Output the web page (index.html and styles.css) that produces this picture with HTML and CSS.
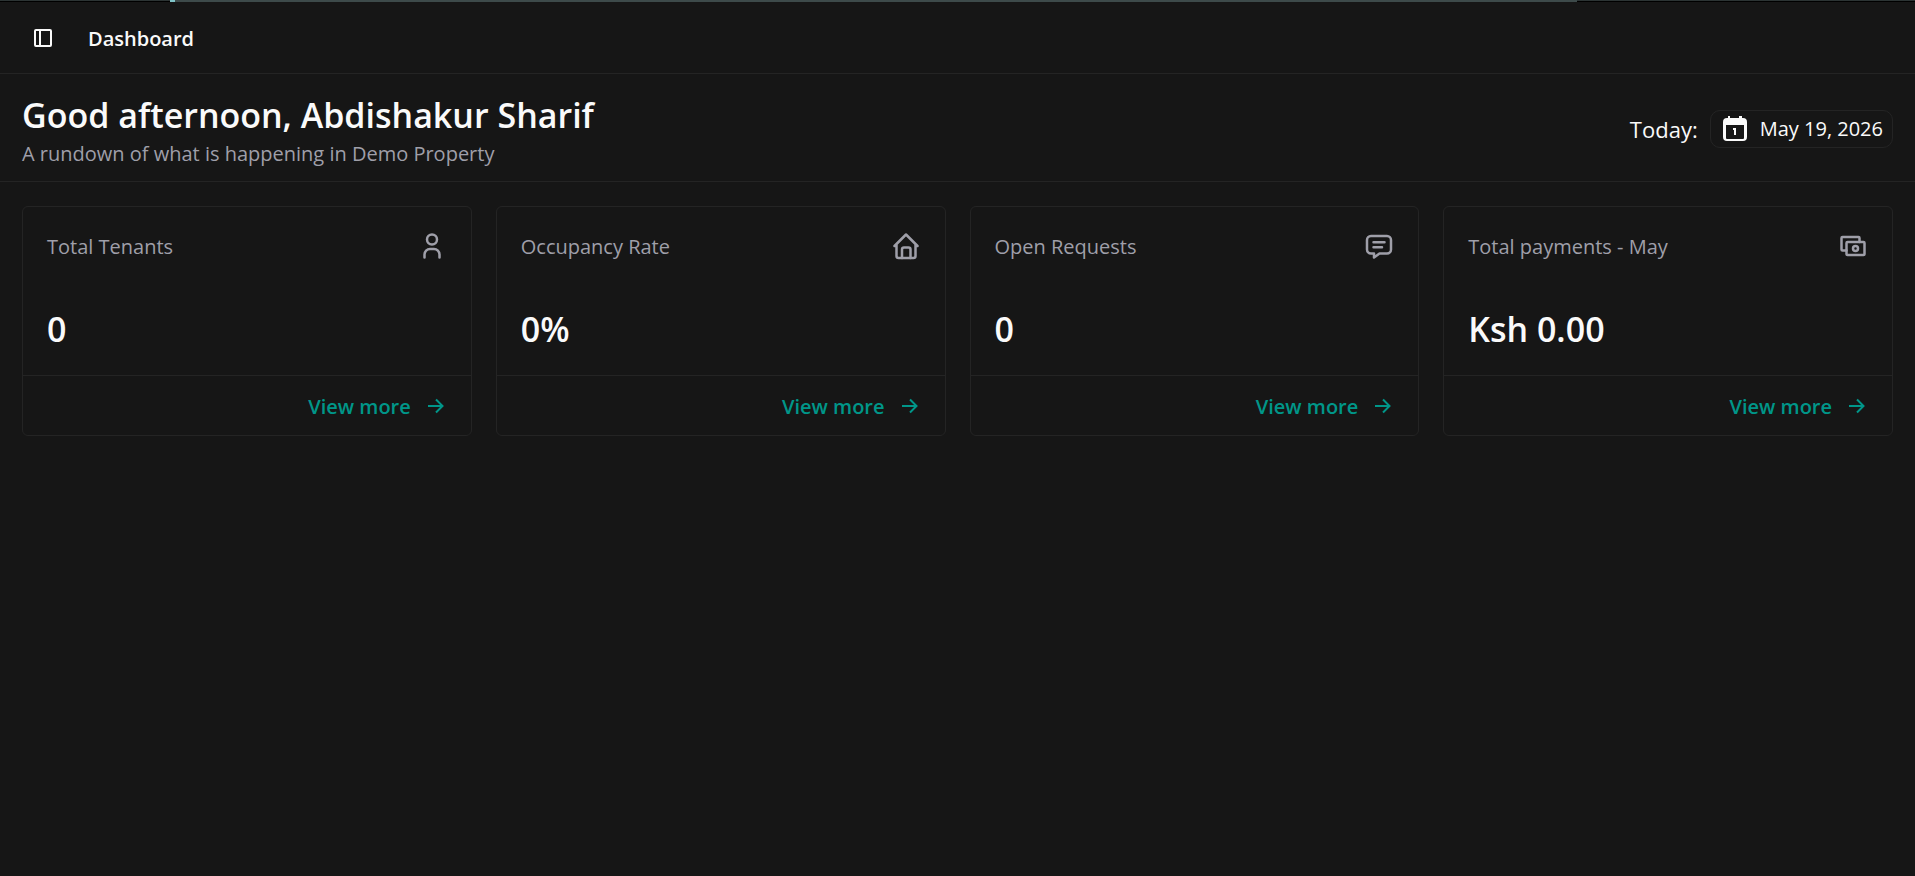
FILE: index.html
```html
<!DOCTYPE html>
<html lang="en">
<head>
    <meta charset="UTF-8">
    <meta name="viewport" content="width=device-width, initial-scale=1.0">
    <title>Dashboard</title>
    <link rel="stylesheet" href="styles.css">
</head>
<body>

<div class="window-edge"><span class="edge-left"></span><span class="edge-mark"></span><span class="edge-main"></span><span class="edge-right"></span></div>

<header class="topbar">
    <button type="button" class="sidebar-toggle" aria-label="Toggle sidebar">
        <svg width="20" height="20" viewBox="0 0 20 20" fill="none" stroke="currentColor" stroke-width="2">
            <rect x="2" y="2" width="16" height="16" rx="1"/>
            <path d="M7 2v16"/>
        </svg>
    </button>
    <span class="page-name">Dashboard</span>
</header>

<section class="greeting">
    <div>
        <h1>Good afternoon, Abdishakur Sharif</h1>
        <p>A rundown of what is happening in Demo Property</p>
    </div>
    <div class="today">
        <span>Today:</span>
        <div class="date">
            <svg width="26" height="26" viewBox="0 0 26 26" fill="none">
                <path fill="currentColor" fill-rule="evenodd" d="M6 0h2v2h9V0h3v2h1a4 4 0 0 1 4 4v15a4 4 0 0 1-4 4H5a4 4 0 0 1-4-4V6a4 4 0 0 1 4-4h1zM4 9v13a1 1 0 0 0 1 1h16a1 1 0 0 0 1-1V9z"/>
                <path d="M11 13h2v6" stroke="currentColor" stroke-width="2"/>
            </svg>
            <time datetime="2026-05-19">May 19, 2026</time>
        </div>
    </div>
</section>

<main class="cards">
    <article class="card">
        <div class="card-body">
            <div class="card-head">
                <h2>Total Tenants</h2>
                <svg class="icon" viewBox="0 0 30 30">
                    <circle cx="15" cy="8.500" r="5"/>
                    <path d="M7.500 26.500V23.500a5.500 5.500 0 0 1 5.500-5.500h4a5.500 5.500 0 0 1 5.500 5.500v3"/>
                </svg>
            </div>
            <p class="value">0</p>
        </div>
        <div class="card-foot">
            <a href="#tenants">View more
                <svg class="arrow" viewBox="0 0 20 20"><path d="M1 9h15M9 2.500l6.500 6.500-6.500 6.500"/></svg>
            </a>
        </div>
    </article>

    <article class="card">
        <div class="card-body">
            <div class="card-head">
                <h2>Occupancy Rate</h2>
                <svg class="icon" viewBox="0 0 30 30">
                    <path d="M3.500 15L15 3.500 26.500 15M5.500 13.500V25a2 2 0 0 0 2 2h15a2 2 0 0 0 2-2V13.500"/>
                    <path d="M11 27v-8.500a2 2 0 0 1 2-2h4.500a2 2 0 0 1 2 2V27"/>
                </svg>
            </div>
            <p class="value">0%</p>
        </div>
        <div class="card-foot">
            <a href="#units">View more
                <svg class="arrow" viewBox="0 0 20 20"><path d="M1 9h15M9 2.500l6.500 6.500-6.500 6.500"/></svg>
            </a>
        </div>
    </article>

    <article class="card">
        <div class="card-body">
            <div class="card-head">
                <h2>Open Requests</h2>
                <svg class="icon" viewBox="0 0 30 30">
                    <path d="M7 5h16a4 4 0 0 1 4 4v9.500a4 4 0 0 1-4 4h-7.500L10 26.500v-4H7a4 4 0 0 1-4-4V9a4 4 0 0 1 4-4z"/>
                    <path d="M9.500 11.200h11M9.500 16.300h8.500"/>
                </svg>
            </div>
            <p class="value">0</p>
        </div>
        <div class="card-foot">
            <a href="#requests">View more
                <svg class="arrow" viewBox="0 0 20 20"><path d="M1 9h15M9 2.500l6.500 6.500-6.500 6.500"/></svg>
            </a>
        </div>
    </article>

    <article class="card">
        <div class="card-body">
            <div class="card-head">
                <h2>Total payments - May</h2>
                <svg class="icon" viewBox="0 0 30 30">
                    <rect x="8.500" y="11" width="18" height="13" rx="1"/>
                    <path d="M8.500 19.500h-4a1 1 0 0 1-1-1V7a1 1 0 0 1 1-1h16a1 1 0 0 1 1 1v4"/>
                    <circle cx="17.500" cy="17.500" r="2.500"/>
                </svg>
            </div>
            <p class="value">Ksh 0.00</p>
        </div>
        <div class="card-foot">
            <a href="#payments">View more
                <svg class="arrow" viewBox="0 0 20 20"><path d="M1 9h15M9 2.500l6.500 6.500-6.500 6.500"/></svg>
            </a>
        </div>
    </article>
</main>

</body>
</html>
```
FILE: styles.css
```css
* {
    box-sizing: border-box;
}

body {
    margin: 0;
    min-height: 100vh;
    background-color: #161616;
    color: #fafafa;
    font-family: "Segoe UI", "Open Sans", "Noto Sans", sans-serif;
    font-size: 20px;
    line-height: 28px;
}

h1, h2, p {
    margin: 0;
}

svg {
    display: block;
    flex-shrink: 0;
}

/* Thin strip along the top of the window */
.window-edge {
    display: flex;
    height: 2px;
    background-color: #000;
}

.edge-left {
    width: 170px;
    border-top: 1px solid #2c3434;
}

.edge-mark {
    width: 5px;
    background-color: #7fc4c8;
}

.edge-main {
    flex: 1;
    background-color: #3d4a4a;
}

.edge-right {
    width: 338px;
    border-top: 1px solid #2c3434;
}

/* Top bar */
.topbar {
    display: flex;
    align-items: center;
    gap: 35px;
    height: 72px;
    padding: 0 33px;
    border-bottom: 1px solid #242424;
}

.sidebar-toggle {
    padding: 0;
    border: none;
    background: none;
    color: #fafafa;
    cursor: pointer;
}

.page-name {
    padding-top: 2px;
    font-weight: 600;
}

/* Greeting */
.greeting {
    display: flex;
    justify-content: space-between;
    align-items: center;
    padding: 16px 22px 13px;
    border-bottom: 1px solid #242424;
}

h1 {
    font-size: 34px;
    line-height: 50px;
    font-weight: 600;
}

.greeting p {
    color: #9f9fa9;
}

.today {
    display: flex;
    align-items: center;
    gap: 12px;
    font-size: 22px;
}

.date {
    display: flex;
    align-items: center;
    gap: 12px;
    height: 38px;
    padding: 0 9px 0 11px;
    border: 1px solid #242424;
    border-radius: 10px;
    font-size: 20px;
}

/* Cards */
.cards {
    display: grid;
    grid-template-columns: repeat(4, 1fr);
    gap: 24px;
    padding: 24px 22px;
}

.card {
    border: 1px solid #242424;
    border-radius: 6px;
}

.card-body {
    padding: 24px;
}

.card-head {
    display: flex;
    justify-content: space-between;
    align-items: center;
    height: 30px;
}

h2 {
    padding-top: 2px;
    font-size: 20px;
    font-weight: 500;
    color: #9f9fa9;
}

.icon {
    width: 30px;
    height: 30px;
    fill: none;
    stroke: #9f9fa9;
    stroke-width: 2.5;
    stroke-linecap: round;
    stroke-linejoin: round;
}

.value {
    margin-top: 46px;
    font-size: 34px;
    line-height: 44px;
    font-weight: 600;
}

.card-foot {
    display: flex;
    justify-content: flex-end;
    padding: 17px 24px 14px;
    border-top: 1px solid #242424;
}

.card-foot a {
    display: flex;
    align-items: center;
    gap: 16px;
    color: #009689;
    font-weight: 600;
    text-decoration: none;
}

.arrow {
    width: 20px;
    height: 20px;
    fill: none;
    stroke: currentColor;
    stroke-width: 2;
}

@media (max-width: 1000px) {
    .cards {
        grid-template-columns: repeat(2, 1fr);
    }
}
```
